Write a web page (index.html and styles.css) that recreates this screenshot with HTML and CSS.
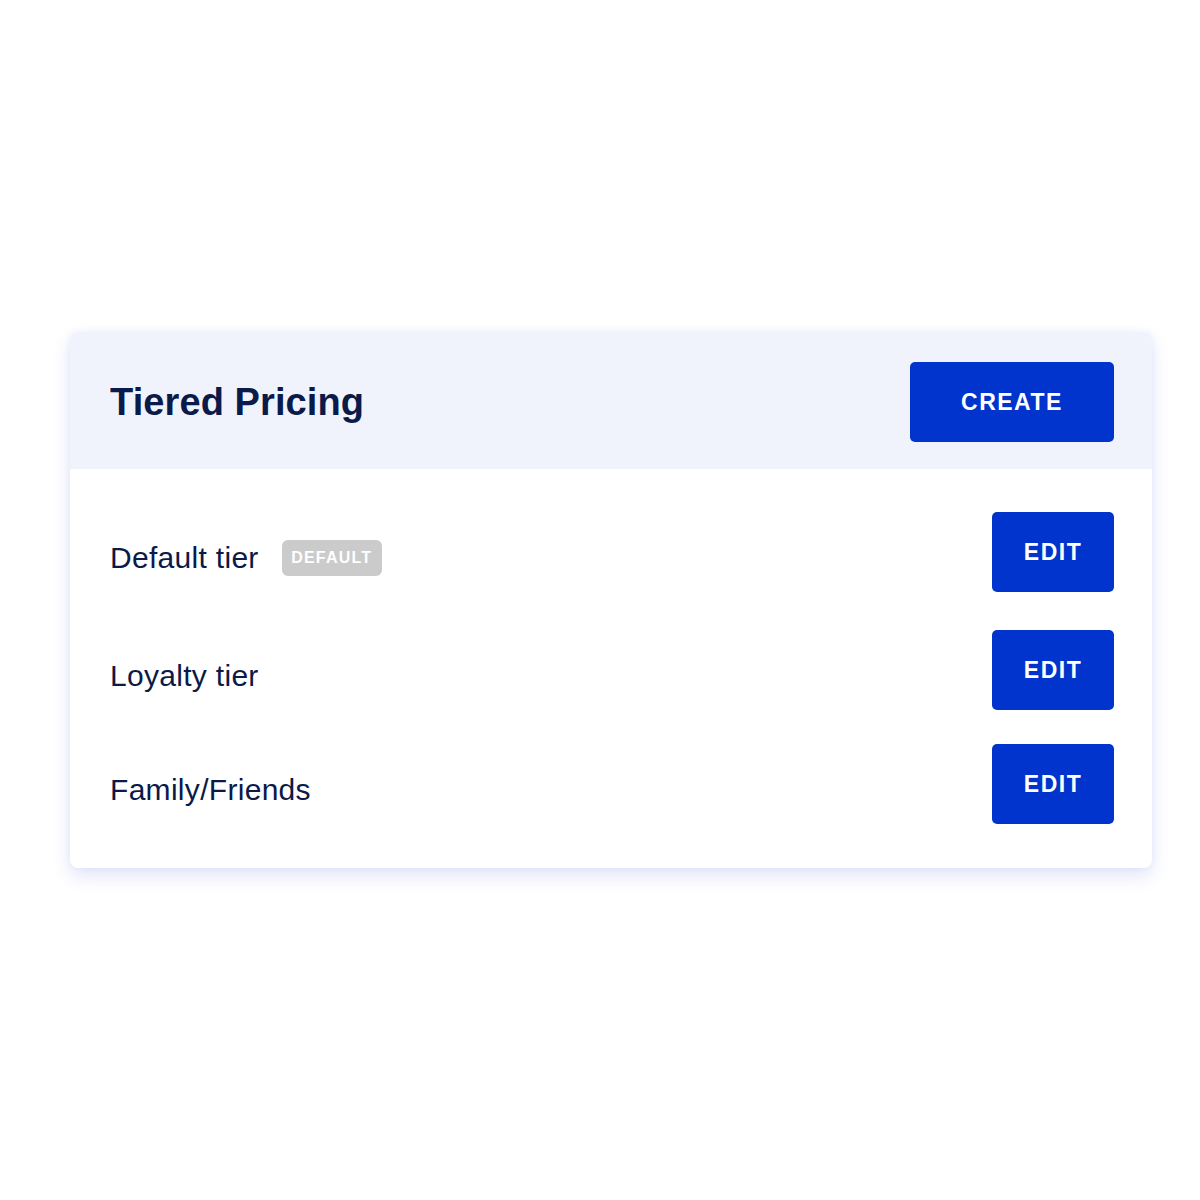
FILE: index.html
```html
<!DOCTYPE html>
<html lang="en">
<head>
<meta charset="utf-8">
<title>Tiered Pricing</title>
<link rel="stylesheet" href="styles.css">
</head>
<body>
  <main class="page">
    <section class="card">
      <header class="card-header">
        <h1 class="card-title">Tiered Pricing</h1>
        <button class="btn btn-create">CREATE</button>
      </header>
      <div class="card-body">
        <div class="row row-first">
          <div class="row-label">
            <span class="row-name">Default tier</span>
            <span class="badge">DEFAULT</span>
          </div>
          <button class="btn btn-edit">EDIT</button>
        </div>
        <div class="row row-second">
          <div class="row-label">
            <span class="row-name">Loyalty tier</span>
          </div>
          <button class="btn btn-edit">EDIT</button>
        </div>
        <div class="row row-third">
          <div class="row-label">
            <span class="row-name">Family/Friends</span>
          </div>
          <button class="btn btn-edit">EDIT</button>
        </div>
      </div>
    </section>
  </main>
</body>
</html>
```

FILE: styles.css
```css
* { box-sizing: border-box; }

html, body {
  margin: 0;
  padding: 0;
  background: #ffffff;
}

body {
  font-family: "Liberation Sans", Arial, sans-serif;
  color: #0b1a48;
  min-height: 1200px;
}

.page {
  padding: 332px 48px 200px 70px;
}

.card {
  width: 1082px;
  background: #ffffff;
  border-radius: 8px;
  box-shadow: 0 8px 18px rgba(50, 80, 220, 0.14), 0 0 6px rgba(50, 80, 220, 0.07);
}

.card-header {
  height: 137px;
  background: #f0f3fb;
  border-radius: 8px 8px 0 0;
  display: flex;
  align-items: center;
  justify-content: space-between;
  padding: 3px 38px 0 40px;
}

.card-title {
  margin: 0;
  font-size: 38px;
  font-weight: 700;
  color: #0a1a4a;
  letter-spacing: 0.1px;
}

.btn {
  border: none;
  background: #0034cc;
  color: #ffffff;
  font-family: "Liberation Sans", Arial, sans-serif;
  font-weight: 700;
  border-radius: 5px;
  height: 80px;
  cursor: pointer;
  letter-spacing: 1.5px;
}

.btn-create {
  width: 204px;
  font-size: 23px;
  padding-bottom: 0;
}

.btn-edit {
  width: 122px;
  font-size: 23px;
  padding-bottom: 0;
}

.card-body {
  padding: 43px 38px 44px 40px;
  display: flex;
  flex-direction: column;
}

.row {
  display: flex;
  align-items: center;
  justify-content: space-between;
}

.row-second { margin-top: 38px; }
.row-third { margin-top: 34px; }

.row-label {
  display: flex;
  align-items: center;
  gap: 23px;
  padding-top: 12px;
}

.row-name {
  font-size: 30px;
  letter-spacing: 0.3px;
  color: #0b1a48;
}

.badge {
  display: inline-flex;
  align-items: center;
  justify-content: center;
  width: 100px;
  height: 36px;
  border-radius: 6px;
  background: #cbcbcb;
  color: #ffffff;
  font-size: 16px;
  font-weight: 700;
  letter-spacing: 1.2px;
}
```
